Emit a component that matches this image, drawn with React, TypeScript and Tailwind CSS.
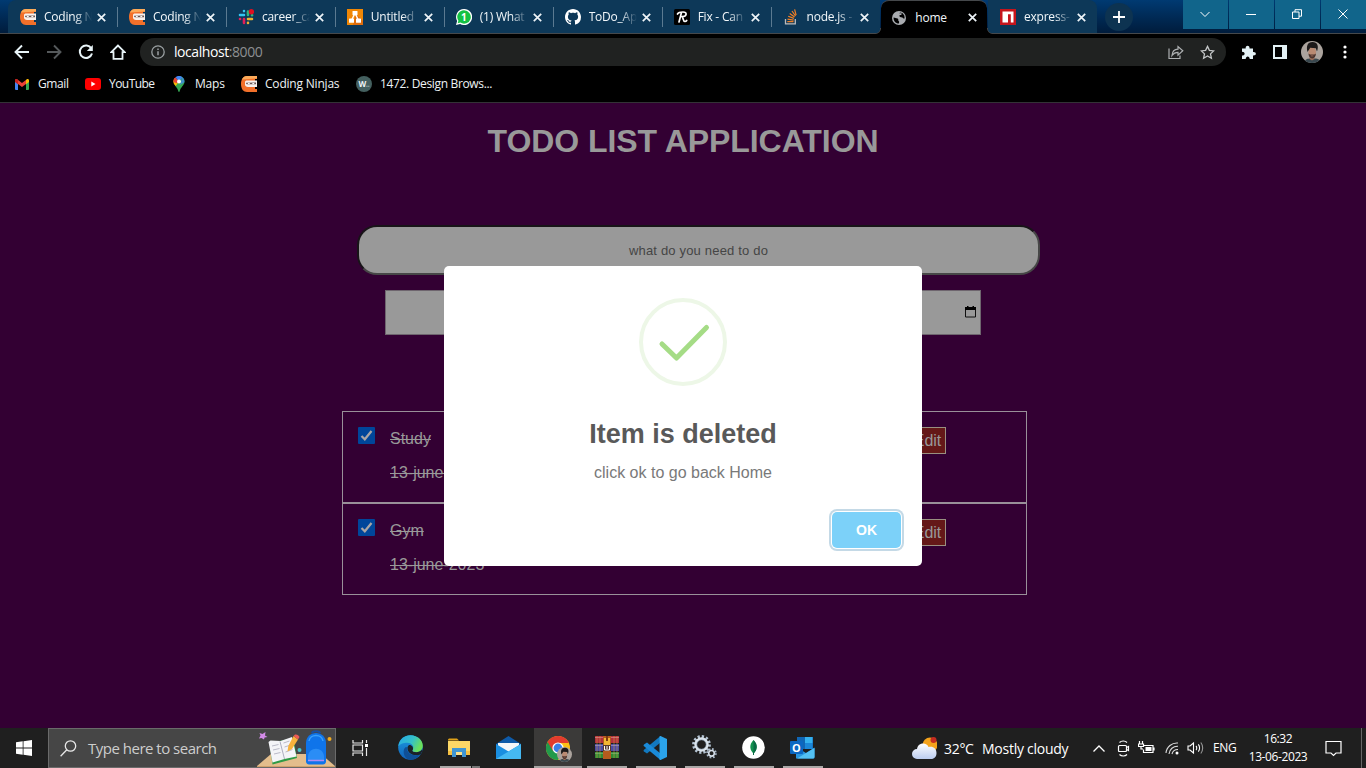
import type { ReactNode } from 'react';

const UI = "font-['Open_Sans','Noto_Sans',sans-serif]";

function Ninja({ size = 16 }: { size?: number }) {
  return (
    <svg width={size} height={size} viewBox="0 0 16 16">
      <path d="M16 0H6C2.500 0 0 3 0 8s2.500 8 6 8h10v-3H14V3h2z" fill="#f2702a" />
      <path d="M16 0H6C3.500 0 1.700 1.500.8 3.600L16 2.400z" fill="#fbab5a" />
      <path d="M4 6C4 5 5 4.500 6 4.500h10V11H7c-1.800 0-3-1-3-2.500z" fill="#f7f1ee" />
      <path d="M5 6.800L15 6.500v1.800H6.500C5.500 8.300 5 7.800 5 6.800z" fill="#6a5552" />
      <path d="M6.800 7.400l2 .2M11.300 7.600l2-.2" stroke="#fff" strokeWidth="1" />
    </svg>
  );
}
const Slack = () => (
  <svg width="16" height="16" viewBox="0 0 16 16" strokeWidth="2.600" strokeLinecap="round" fill="none">
    <path d="M6 2v.1M2 6h4" stroke="#36c5f0" />
    <path d="M14 6.200h.1M10 2.500V6" stroke="#2eb67d" />
    <path d="M10 14v-.1M10 10h4" stroke="#ecb22e" />
    <path d="M2 10h.1M6 10v4" stroke="#e01e5a" />
    <circle cx="13.400" cy="2.800" r="2.700" fill="#e01020" />
  </svg>
);
const DrawIo = () => (
  <svg width="16" height="16" viewBox="0 0 16 16">
    <rect width="16" height="16" fill="#f08705" />
    <path d="M9 5L16 12v4H6z" fill="#df6c0c" />
    <path d="M8 4L4.500 11.500M8 4l3.500 7.500" stroke="#fff" strokeWidth="1.400" />
    <rect x="5.500" y="2" width="5" height="4.300" rx=".6" fill="#fff" />
    <rect x="2" y="9.500" width="5" height="4.300" rx=".6" fill="#fff" />
    <rect x="9" y="9.500" width="5" height="4.300" rx=".6" fill="#fff" />
  </svg>
);
const WhatsApp = () => (
  <span className="relative flex h-4 w-4 items-center justify-center">
    <svg width="16" height="16" viewBox="0 0 16 16" className="absolute inset-0">
      <path d="M8 0a8 8 0 0 0-6.900 12L0 16l4.100-1.100A8 8 0 1 0 8 0z" fill="#fff" />
      <path d="M8 1.300a6.700 6.700 0 0 0-5.600 10.400l-.7 2.600 2.700-.7A6.700 6.700 0 1 0 8 1.300z" fill="#14c244" />
    </svg>
    <span className="relative font-['Open_Sans',sans-serif] text-[10px] leading-none font-bold text-white">1</span>
  </span>
);
const Github = () => (
  <svg width="16" height="16" viewBox="0 0 16 16" fill="#fff">
    <path d="M8 0C3.580 0 0 3.580 0 8c0 3.540 2.290 6.530 5.470 7.590.4.070.55-.17.55-.38 0-.19-.01-.82-.01-1.490-2.010.37-2.530-.49-2.690-.94-.09-.23-.48-.94-.82-1.130-.28-.15-.68-.52-.01-.53.63-.01 1.080.58 1.230.82.72 1.210 1.870.87 2.330.66.07-.52.28-.87.51-1.070-1.780-.2-3.640-.89-3.640-3.950 0-.87.31-1.590.82-2.150-.08-.2-.36-1.020.08-2.120 0 0 .67-.21 2.200.82.64-.18 1.320-.27 2-.27s1.360.09 2 .27c1.530-1.040 2.200-.82 2.200-.82.44 1.100.16 1.920.08 2.120.51.56.82 1.270.82 2.150 0 3.070-1.870 3.750-3.650 3.950.29.25.54.73.54 1.480 0 1.070-.01 1.930-.01 2.200 0 .21.15.46.55.38A8.010 8.010 0 0 0 16 8c0-4.420-3.580-8-8-8z" />
  </svg>
);
const Resume = () => (
  <svg width="16" height="16" viewBox="0 0 16 16">
    <rect width="16" height="16" rx="1.500" fill="#000" />
    <path d="M3.500 5C4.500 3.200 6.500 3 9 3c4.500 0 4 4.500-1 4.700M7.500 3.500L5 13M8 7.800c1.500.5.8 4.700 3 4.700 1 0 1.300-.4 1.700-1" stroke="#fff" strokeWidth="1.700" fill="none" strokeLinecap="round" />
  </svg>
);
const StackOverflow = () => (
  <svg width="16" height="16" viewBox="0 0 16 16" fill="none">
    <path d="M2.500 10v4.800h9.800V10" stroke="#bcbbbb" strokeWidth="1.300" />
    <path d="M4.300 12.600h6.200M4.500 10.200l6.100.9M5.200 7.200l5.700 2.200M6.700 4.400l4.900 3.700M9 2l3.500 5M11.600.3l1.500 5.900" stroke="#f48024" strokeWidth="1.200" />
  </svg>
);
const Globe = () => (
  <svg width="16" height="16" viewBox="0 0 16 16">
    <circle cx="8" cy="8" r="7" fill="#a9acb0" />
    <path d="M2.600 7.500l4 1c1.500.5 0 1.500 1 2.500.8.600.6 1.500.2 2.600C4.500 13.400 2.300 10.700 2.600 7.500z" fill="#000" />
    <path d="M8 3.200h2.500c.5 1 0 1.800-1.500 1.800-1 0-.5 1.500 0 2 1.500.5 3 0 4 2l.6-1-.3-2.500-1.700-2.200L9.500 2.600z" fill="#000" />
  </svg>
);
const Npm = () => (
  <svg width="16" height="16" viewBox="0 0 16 16">
    <path fill="#c6151c" d="M0 0h16v16H0z" />
    <path fill="#fff" d="M2.500 2.500h11v11h-2.700V5.300H8v8.200H2.500z" />
  </svg>
);
const Gmail = () => (
  <svg width="14" height="11" viewBox="0 0 14 11">
    <path d="M0 2h3v9H1a1 1 0 0 1-1-1z" fill="#4285f4" />
    <path d="M11 2h3v8a1 1 0 0 1-1 1h-2z" fill="#34a853" />
    <path d="M0 1.500C0 .2 1.400-.4 2.400.4L7 4 11.600.4 11 5 7 8 0 2.800z" fill="#ea4335" />
    <path d="M11 1l.6-.6c1-.8 2.400-.2 2.400 1.100V3l-3 2.300z" fill="#fbbc04" />
    <path d="M0 1.500C0 .4 1.200-.2 2.200.3L3 1v4.300L0 3z" fill="#c5221f" />
  </svg>
);
const YouTube = () => (
  <svg width="16" height="12" viewBox="0 0 16 12">
    <rect width="16" height="12" rx="3" fill="#f00" />
    <path d="M6.300 3.500v5L10.500 6z" fill="#fff" />
  </svg>
);
const Maps = () => (
  <svg width="12" height="16" viewBox="0 0 12 16">
    <path d="M6 0a5.500 5.500 0 0 1 5.500 5.500C11.500 9.500 7.500 11 6.600 15.500c-.1.600-1.100.6-1.200 0C4.800 12.500 3.500 11.500 2 9.400z" fill="#34a853" />
    <path d="M1.200 8.200A5.500 5.500 0 0 1 1.700 2L6 5.500 2.700 10z" fill="#fbbc04" />
    <path d="M1.700 2.100A5.500 5.500 0 0 1 2.500 1.300L6 5 3.800 7.300.5 6C.4 4.300.8 3 1.700 2.100z" fill="#ea4335" />
    <path d="M2.500 1.300A5.500 5.500 0 0 1 9.500 1.300L6 5.500z" fill="#4285f4" />
    <path d="M9.300 1.200c1.600 1.100 2.400 3 2.100 5L7 9z" fill="#4285f4" opacity=".75" />
    <circle cx="6" cy="5.400" r="2" fill="#fff" />
  </svg>
);

function Close() {
  return (
    <svg width="9" height="9" viewBox="0 0 9 9" className="shrink-0">
      <path d="M.8.8l7.400 7.400M8.200.8L.8 8.200" stroke="#eef4f8" strokeWidth="1.700" />
    </svg>
  );
}

const tabs: { icon: ReactNode; label: string; active?: boolean; sep?: boolean }[] = [
  { icon: <Ninja />, label: 'Coding N', sep: true },
  { icon: <Ninja />, label: 'Coding N', sep: true },
  { icon: <Slack />, label: 'career_ca', sep: true },
  { icon: <DrawIo />, label: 'Untitled', sep: true },
  { icon: <WhatsApp />, label: '(1) What', sep: true },
  { icon: <Github />, label: 'ToDo_Ap', sep: true },
  { icon: <Resume />, label: 'Fix - Can', sep: true },
  { icon: <StackOverflow />, label: 'node.js -' },
  { icon: <Globe />, label: 'home', active: true },
  { icon: <Npm />, label: 'express-' },
];

function TabStrip() {
  return (
    <div className="flex h-[34px] shrink-0 border-b border-[#45484b] bg-linear-to-b from-[#003a72] to-[#001c3c]">
      <div className="flex w-[1097px] pl-2">
        {tabs.map((t, i) => (
          <div
            key={i}
            className={
              'flex h-[33px] shrink-0 items-center pt-px ' +
              (t.active
                ? 'relative z-10 mr-[0.500px] ml-[1.100px] h-[34px] w-[106.900px] rounded-t-lg border-t border-[#45484b] bg-black pb-px pl-[10.700px]'
                : 'w-[108.950px] bg-[#0d3858] pl-3') +
              (i === 0 ? ' rounded-tl-lg' : '') +
              (i === 9 ? ' rounded-tr-lg' : '')
            }
          >
            {t.active && (
              <>
                <span className="absolute bottom-0 -left-[6px] h-[6px] w-[6px] bg-[radial-gradient(circle_at_0_0,transparent_5px,#45484b_5.500px,#000_6.500px)]" />
                <span className="absolute -right-[6px] bottom-0 h-[6px] w-[6px] bg-[radial-gradient(circle_at_6px_0,transparent_5px,#45484b_5.500px,#000_6.500px)]" />
              </>
            )}
            <span className="flex h-4 w-4 shrink-0 items-center justify-center">{t.icon}</span>
            <span
              className={
                'ml-2 w-[48px] shrink-0 text-[12px] tracking-[-0.220px] whitespace-nowrap text-[#f2f7fa] ' +
                (t.active ? '' : 'mask-r-from-65% mask-r-to-100%')
              }
            >
              {t.label}
            </span>
            <span className="ml-[5px] flex">
              <Close />
            </span>
            {t.sep && <span className="relative z-10 -mr-px ml-auto h-5 w-px bg-[#5b7a91]" />}
          </div>
        ))}
      </div>
      <div className="ml-2 flex items-center">
        <span className="flex h-7 w-7 items-center justify-center rounded-full bg-[#0d3351]">
          <svg width="12" height="12" viewBox="0 0 12 12">
            <path d="M6 0v12M0 6h12" stroke="#fff" strokeWidth="1.800" />
          </svg>
        </span>
      </div>
      <div className="ml-auto flex h-[29px] gap-px">
        {[
          <path key="a" d="M.5 3l4.500 4.500L9.500 3" />,
          <path key="b" d="M0 5.500h10" />,
          <path key="c" d="M.5 3h6.500v6.500H.5zM3 3V.7h6.500v6.500H7" />,
          <path key="d" d="M.5.5l9 9M9.500.5l-9 9" />,
        ].map((p, i) => (
          <span key={i} className="flex w-[45px] items-center justify-center bg-[#11658b] pr-px pb-px">
            <svg width="10" height="10" viewBox="0 0 10 10" fill="none" stroke="#fff" strokeWidth="1">
              {p}
            </svg>
          </span>
        ))}
      </div>
    </div>
  );
}

function Avatar({ size }: { size: number }) {
  return (
    <svg width={size} height={size} viewBox="0 0 22 22">
      <clipPath id={'av' + size}>
        <circle cx="11" cy="11" r="11" />
      </clipPath>
      <g clipPath={'url(#av' + size + ')'}>
        <path d="M0 0h22v22H0z" fill="#aba39d" />
        <path d="M3 22c1-4 4-4.500 6-4.500h5c3 0 5 1 6 4.500z" fill="#39484f" />
        <path d="M8.500 13h5v5l-2.500 1.500-2.500-1.500z" fill="#9a6d58" />
        <ellipse cx="11.200" cy="11.200" rx="3.800" ry="5.400" fill="#b98a72" />
        <path d="M6.500 11C5 5 6.500 1 11.500 1S18 5 16 10.500L14.800 7.200l-5.500-.4L7.800 9z" fill="#1d1a1a" />
        <path d="M7.500 12.500c1 1.200 2.500 1.100 3.700 1.100s2.700.1 3.700-1.100c0 2.800-1.500 5-3.700 5s-3.700-2.200-3.700-5z" fill="#4a342d" />
        <path d="M9.800 14.900h2.600" stroke="#a8705f" strokeWidth=".8" />
      </g>
    </svg>
  );
}

function Toolbar() {
  return (
    <div className="flex h-9 shrink-0 items-center bg-black">
      <div className="flex w-[140px] items-center gap-4 pl-[14px]">
        <svg width="16" height="16" viewBox="0 0 16 16" fill="none" stroke="#e8f4f8" strokeWidth="1.900">
          <path d="M15 8H2M8 1.500L1.500 8 8 14.500" />
        </svg>
        <svg width="16" height="16" viewBox="0 0 16 16" fill="none" stroke="#55595b" strokeWidth="1.900">
          <path d="M1 8h13M8 1.500L14.500 8 8 14.500" />
        </svg>
        <svg width="16" height="16" viewBox="0 0 16 16" fill="none" stroke="#e8f4f8" strokeWidth="2">
          <path d="M13.300 4.400A6.200 6.200 0 1 0 14 9.500" />
          <path d="M14.800 1v6h-6z" fill="#e8f4f8" stroke="none" />
        </svg>
        <svg width="16" height="16" viewBox="0 0 16 16" fill="none" stroke="#e8f4f8" strokeWidth="1.800">
          <path d="M8 1.500L1.300 8.200H3.500v6.600h9V8.200h2.200z" />
        </svg>
      </div>
      <div className="flex h-7 w-[1086px] items-center rounded-full bg-[#202221] pr-[11px] pl-[11px]">
        <svg width="14" height="14" viewBox="0 0 14 14" fill="none" stroke="#9aa0a2" strokeWidth="1.300">
          <circle cx="7" cy="7" r="6.200" />
          <path d="M7 6.200v4M7 3.400v1.500" strokeWidth="1.500" />
        </svg>
        <span className="ml-[9px] pb-px text-[14px] tracking-[-0.430px] text-white">
          localhost<span className="text-[#8d9092]">:8000</span>
        </span>
        <svg width="16" height="16" viewBox="0 0 16 16" fill="none" stroke="#aeb1b2" strokeWidth="1.200" className="ml-auto">
          <path d="M1 4.500v10h11v-3M4 11.500C4.300 7.500 6.500 5.300 10 5.200V2.500l4.800 4.300-4.800 4.300V8.300C7.500 8.300 5.500 9.300 4 11.500z" />
        </svg>
        <svg width="15" height="15" viewBox="0 0 15 15" fill="none" stroke="#c4c7c8" strokeWidth="1.300" className="ml-4">
          <path d="M7.500 1.400l1.900 4 4.300.5-3.200 3 .9 4.300-3.900-2.200-3.900 2.200.9-4.300-3.200-3 4.300-.5z" />
        </svg>
      </div>
      <svg width="15" height="15" viewBox="0 0 15 15" fill="#e3f1f5" className="ml-[15px]">
        <path d="M1 3.500h3.700C4.200-.3 9-.3 8.500 3.500h3.500V7c3.800-.4 3.800 3.900 0 3.500V14H8.700c0-3.500-4-3.500-4 0H1v-3.500c3.500 0 3.500-3.700 0-3.700z" />
      </svg>
      <svg width="14" height="14" viewBox="0 0 14 14" className="ml-[17px]">
        <path d="M0 0h14v14H0z" fill="#e3f1f5" />
        <path d="M2 2h7v10H2z" fill="#000" />
      </svg>
      <span className="ml-[14px]">
        <Avatar size={22} />
      </span>
      <svg width="4" height="14" viewBox="0 0 4 14" fill="#fff" className="ml-[19.500px]">
        <circle cx="2" cy="2" r="1.600" />
        <circle cx="2" cy="7" r="1.600" />
        <circle cx="2" cy="12" r="1.600" />
      </svg>
    </div>
  );
}

function Bookmarks() {
  return (
    <div className="flex h-[33px] shrink-0 items-center border-b border-[#333236] bg-black pb-1 pl-[15px] text-[12px] tracking-[-0.200px] whitespace-nowrap text-[#eef3f5]">
      <Gmail />
      <span className="ml-[9px] w-[47px] tracking-[-0.400px]">Gmail</span>
      <YouTube />
      <span className="ml-2 w-[64px] tracking-[-0.550px]">YouTube</span>
      <Maps />
      <span className="ml-[10px] w-[46px]">Maps</span>
      <Ninja />
      <span className="ml-2 w-[91px]">Coding Ninjas</span>
      <span className="flex h-4 w-4 items-center justify-center rounded-full bg-[#44605f] text-[8px] font-bold tracking-[-0.500px]">
        W<span className="text-[#8fa5a4]">..</span>
      </span>
      <span className="ml-2 tracking-[-0.340px]">1472. Design Brows...</span>
    </div>
  );
}

function TodoRow({ title }: { title: string }) {
  return (
    <div className="flex h-[92px] border border-[#999099] pl-[15px] text-[16px] text-[#999]">
      <span className="mt-[15px] flex h-[17px] w-[17px] items-center justify-center rounded-[1px] bg-[#00469a]">
        <svg width="13" height="13" viewBox="0 0 13 13" fill="none" stroke="#aaa6a6" strokeWidth="2.200">
          <path d="M1.500 7l3.300 3.300L11.500 2" />
        </svg>
      </span>
      <div className="ml-[15px] flex w-[516px] flex-col pt-[10px] leading-[34px] line-through">
        <span>{title}</span>
        <span>13-june-2023</span>
      </div>
      <span className="mt-[15px] flex h-[27px] w-[40px] items-center justify-center border border-[#999080] bg-[#641818] pl-[3px] text-[#999]">
        Edit
      </span>
    </div>
  );
}

function Page() {
  return (
    <div className="relative flex h-[625px] shrink-0 flex-col bg-[#330033] font-['Liberation_Sans',Arial,sans-serif]">
      <h1 className="mt-5 text-center text-[32px] leading-[37px] font-bold tracking-[-0.060px] text-[#999]">TODO LIST APPLICATION</h1>
      <div className="mt-[65px] ml-[357px] flex h-[50px] w-[683px] items-center justify-center rounded-[20px] border-2 border-t-[#181418] border-r-[#474747] border-b-[#474747] border-l-[#181418] bg-[#999] pt-0.5 text-[13px] text-[#454545]">
        <span className="tracking-[0.180px]">what do you need to do</span>
      </div>
      <div className="mt-[15px] ml-[385px] flex h-[45px] w-[596px] items-center justify-end border border-[#6e656e] bg-[#999] pr-1 pb-px">
        <svg width="11" height="12" viewBox="0 0 11 12">
          <path d="M.5 2.500h10v8.500H.5z" fill="none" stroke="#111" />
          <path d="M0 1h11v3H0zM2 0h1.500v2H2zM7.500 0H9v2H7.500z" fill="#000" />
        </svg>
      </div>
      <div className="mt-[76px] ml-[342px] w-[685px]">
        <TodoRow title="Study" />
        <TodoRow title="Gym" />
      </div>
      <div className="absolute inset-0 flex items-center justify-center pt-px">
        <div className="flex h-[300px] w-[478px] flex-col items-center rounded-[5px] bg-white">
          <svg width="88" height="88" viewBox="0 0 88 88" fill="none" className="mt-8 shrink-0">
            <circle cx="44" cy="44" r="42" stroke="#edf7e7" strokeWidth="4" />
            <path d="M23 46l14.500 14L67.500 29.500" stroke="#a5dc86" strokeWidth="5" strokeLinecap="round" strokeLinejoin="round" />
          </svg>
          <div className="mt-[32px] text-[27px] leading-8 font-bold text-[#595959]">Item is deleted</div>
          <div className="mt-[14px] text-[16px] leading-[18px] text-[#797979]">click ok to go back Home</div>
          <div className="mt-[30px] mr-[21px] flex h-9 w-[69px] items-center justify-center self-end rounded-[5px] bg-[#7cd1f9] text-[14px] font-bold text-white shadow-[0_0_0_1px_#fff,0_0_0_3px_#c4d9e6]">
            OK
          </div>
        </div>
      </div>
    </div>
  );
}

const Edge = () => (
  <svg width="25" height="25" viewBox="0 0 24 24">
    <defs>
      <linearGradient id="e1" x1="0" y1="0" x2="1" y2=".4">
        <stop offset="0" stopColor="#25a8e8" />
        <stop offset=".6" stopColor="#35c1c8" />
        <stop offset="1" stopColor="#6be05a" />
      </linearGradient>
      <linearGradient id="e2" x1="0" y1="0" x2="0" y2="1">
        <stop offset="0" stopColor="#1b9de2" />
        <stop offset="1" stopColor="#1160b8" />
      </linearGradient>
    </defs>
    <circle cx="12" cy="12" r="11.800" fill="url(#e2)" />
    <path d="M8.500 12c0 6 6 9 12.500 6.500-2 3.500-5.500 5.300-9 5.300C7 23.500 5 18 5.500 15S8 11 8.500 12z" fill="#0f4f96" />
    <path d="M.3 11C1 4 6 .2 12 .2c7 0 11.800 5 11.800 10 0 4-3 6.300-6.300 6.300-3 0-4.500-1.200-3.500-2.300C16 11.500 13.500 7.500 9 7.500 5 7.500 1.500 9 .3 11z" fill="url(#e1)" />
    <path d="M14.200 14.200c-1 1-.2 2.300 3.300 2.300 2.300 0 4.300-1 5.500-2.700l.6 1.200-2 3.700c-6 1.800-12.500-.4-12.500-6.200 0-1 .4-2.200 1.500-3 2.800-.2 4.600 2.500 3.600 4.700z" fill="#1c2228" />
  </svg>
);
const Folder = () => (
  <svg width="23" height="20" viewBox="0 0 23 20">
    <path d="M0 1.500L1 .5h8l2 2H0z" fill="#e0a21a" />
    <path d="M0 3h22v14H0z" fill="#fcd766" />
    <path d="M0 13h22v4H0z" fill="#f5bf40" />
    <path d="M4 10h14v9h-4v-5H8v5H4z" fill="#3f95d2" />
    <path d="M8 14h6v3H8z" fill="#fbe08a" />
  </svg>
);
const Mail = () => (
  <svg width="25" height="23" viewBox="0 0 25 23">
    <path d="M0 8L12.500 0 25 8v4H0z" fill="#0e5aa8" />
    <path d="M2 7h21v10H2z" fill="#f4f6f8" />
    <path d="M0 8l12.500 7.500L25 8v15H0z" fill="#1a8ee0" />
    <path d="M0 23L12.500 15.500 25 8v15z" fill="#45b8f2" />
  </svg>
);
const Chrome = () => (
  <span className="relative flex">
    <svg width="24" height="24" viewBox="0 0 24 24">
      <circle cx="12" cy="12" r="12" fill="#fbc116" />
      <path d="M12 12L1.600 6A12 12 0 0 0 12 24l5-8.800z" fill="#229a4b" />
      <path d="M12 7h10.900A12 12 0 0 0 1.600 6L7 15z" fill="#e33b2e" />
      <circle cx="12" cy="12" r="5.600" fill="#fff" />
      <circle cx="12" cy="12" r="4.400" fill="#3c7ee8" />
    </svg>
    <span className="absolute top-[11px] left-[11px]">
      <Avatar size={15} />
    </span>
  </span>
);
const WinRar = () => (
  <svg width="24" height="23" viewBox="0 0 24 23">
    <path d="M0 0h24v7H0z" fill="#b02f3d" />
    <path d="M0 8h24v7H0z" fill="#4a4aa5" />
    <path d="M0 16h24v6H0z" fill="#2f8a35" />
    <path d="M0 1.500h24M0 9.500h24M0 17.300h24" stroke="#fff" strokeOpacity=".3" />
    <path d="M2 0v22M5 0v22M19 0v22M22 0v22" stroke="#d9a441" strokeWidth=".5" />
    <path d="M8 0h8v23H8z" fill="#b55b1d" />
    <path d="M9 2h6v7H9z" fill="#f2b632" />
    <path d="M11 0h2v5h-2z" fill="#7e3b10" />
    <path d="M8 9h8v6H8z" fill="#5b3b2c" />
    <path d="M9.500 10v4h5v-4M12 10v3" stroke="#fff" fill="none" />
  </svg>
);
const VsCode = () => (
  <svg width="25" height="24" viewBox="0 0 25 24">
    <path d="M17.500 0v6.500L4 17.500 1 15.500c-.6-.5-.6-1.300 0-1.800z" fill="#1279c0" />
    <path d="M17.500 24v-6.500L4 6.500 1 8.500c-.6.500-.6 1.300 0 1.800z" fill="#1a8ad8" />
    <path d="M17.500 0L24 3v18l-6.500 3c-.8 0-1-.5-1-1V1c0-.5.200-1 1-1z" fill="#2ba3ea" />
  </svg>
);
const Gears = () => (
  <svg width="25" height="25" viewBox="0 0 25 25" fill="none">
    <circle cx="9.500" cy="9.500" r="7.900" stroke="#b5c4d3" strokeWidth="3" strokeDasharray="2.200 1.940" />
    <circle cx="9.500" cy="9.500" r="5.900" stroke="#dbe4ec" strokeWidth="2.600" />
    <circle cx="9.500" cy="9.500" r="4.600" stroke="#74889c" strokeWidth=".6" />
    <circle cx="19.500" cy="18.300" r="4.300" stroke="#a8b8c8" strokeWidth="2" strokeDasharray="1.700 1.680" />
    <circle cx="19.500" cy="18.300" r="2.800" stroke="#d5dee8" strokeWidth="1.600" />
  </svg>
);
const Mongo = () => (
  <svg width="23" height="23" viewBox="0 0 23 23">
    <circle cx="11.500" cy="11.500" r="11.300" fill="#fff" />
    <path d="M11.500 4c5 5 3.500 10.500 0 13.500C8 14.500 6.500 9 11.500 4z" fill="#12924f" />
    <path d="M11.500 4c5 5 3.500 10.500 0 13.500z" fill="#0a6b45" />
    <path d="M11.500 16v3" stroke="#0a6b45" />
  </svg>
);
const Outlook = () => (
  <span className="relative flex">
    <svg width="25" height="23" viewBox="0 0 25 23">
      <path d="M7 1h16v12H7z" fill="#1066b5" />
      <path d="M15 1h7.500v6H15z" fill="#35b1ee" />
      <path d="M15 7h7.500v6H15z" fill="#1b87d8" />
      <path d="M6 11l10 6 8.500-5.500V21a1.500 1.500 0 0 1-1.500 1.500H6z" fill="#2796e2" />
      <path d="M7 22.500L24.500 12V21a1.500 1.500 0 0 1-1.500 1.500z" fill="#53c1f3" />
      <rect y="5" width="13" height="13" rx="1" fill="#0b67c2" />
    </svg>
    <span className="absolute top-[5px] left-0 w-[13px] text-center text-[11px] leading-[13px] font-bold text-white">O</span>
  </span>
);

function SearchArt() {
  return (
    <svg width="80" height="39" viewBox="0 0 80 39" className="-mr-px ml-auto shrink-0">
      <path d="M1 37L15 25h50l14 12z" fill="#e3bd8c" />
      <path d="M1 39v-2h79v2z" fill="#cfa06b" />
      <path d="M8 10.500L5.500 9 3 9.500l1.500-3L3.500 4 6.500 5 9.500 3 9 6.500l2.500 1.500L8.500 8.500z" fill="#d38be8" />
      <path d="M13.500 14l24-5 3.500 20-24.500 6.500z" fill="#2e9b45" />
      <path d="M12.500 13l2-1.500 10 .5L36 8l4.500 19.500-12 2.500-12 3.500z" fill="#f4f4f8" />
      <path d="M24 12.500l4.500 17.500" stroke="#a5a5b8" strokeWidth=".9" />
      <path d="M16 17l6.500-1.500M17 21l6.500-1.500M18 25l6.500-1.500M27.500 14l6-2M28.500 18l6-2M29.500 23l7-2.500" stroke="#aaaabb" strokeWidth=".8" />
      <path d="M37.500 7l4.500 3.500L36 20l-4.500 2.500.8-5.500z" fill="#f7b13c" />
      <path d="M37.500 7l4.500 3.500 1.500-2.500c-.5-1.500-2.500-3-4.500-2.500z" fill="#ed5b55" />
      <circle cx="43.500" cy="21" r="2" fill="#4bc5cb" />
      <path d="M56 4.500c0-3 8-3 8 0" stroke="#174ea3" strokeWidth="2" fill="none" />
      <path d="M50 14c0-13.500 20-13.500 20 0v18c0 2-1 3.500-3 3.500H53c-2 0-3-1.500-3-3.500z" fill="#0f74ea" />
      <path d="M53 12c1-7.500 13-7.500 14 0" stroke="#3aa0fa" strokeWidth="1.500" fill="none" />
      <path d="M52 28c0-11 16-11 16 0v4H52z" fill="#2b8df5" />
      <path d="M52 31.500h16" stroke="#b08cf5" strokeWidth="1.500" />
      <circle cx="73.500" cy="10" r="2" fill="#f2ac20" />
    </svg>
  );
}

const apps: { icon: ReactNode; open: boolean; active?: boolean }[] = [
  { icon: <Edge />, open: false },
  { icon: <Folder />, open: true },
  { icon: <Mail />, open: false },
  { icon: <Chrome />, open: false, active: true },
  { icon: <WinRar />, open: true },
  { icon: <VsCode />, open: true },
  { icon: <Gears />, open: true },
  { icon: <Mongo />, open: true },
  { icon: <Outlook />, open: true },
];

function Taskbar() {
  return (
    <div className="flex h-10 shrink-0 items-stretch bg-[#1f1f1f] text-white">
      <div className="flex w-12 items-center justify-center">
        <svg width="16" height="16" viewBox="0 0 16 16" fill="#fff">
          <path d="M0 2.300L6.700 1.300V7.600H0zM7.500 1.200L16 0v7.600H7.500zM0 8.400h6.700v6.300L0 13.700zM7.500 8.400H16V16l-8.500-1.200z" />
        </svg>
      </div>
      <div className="flex w-72 items-center overflow-hidden border border-[#6a6a6a] bg-[#464646] pl-[11px]">
        <svg width="17" height="17" viewBox="0 0 17 17" fill="none" stroke="#e8e8e8" strokeWidth="1.300">
          <circle cx="10.500" cy="6" r="5.200" />
          <path d="M6.800 9.800L.6 16.200" />
        </svg>
        <span className="ml-[11px] text-[15px] tracking-[-0.500px] whitespace-nowrap text-[#cdcdcd]">Type here to search</span>
        <SearchArt />
      </div>
      <div className="flex w-[50px] items-center justify-center pr-[2px]">
        <svg width="17" height="16" viewBox="0 0 17 16" fill="none" stroke="#e8e8e8" strokeWidth="1.200">
          <path d="M1 0v3h9.500V0M1 16v-3h9.500v3M1 5h9.500v6H1zM14.500 0v3M14.500 8v8" />
          <path d="M13 4h3v3h-3z" fill="#fff" stroke="none" />
        </svg>
      </div>
      <div className="flex w-[442px]">
        {apps.map((a, i) => (
          <div key={i} className="flex w-[49px] shrink-0 flex-col items-start">
            <div className={'flex w-12 flex-col items-center ' + (a.active ? 'ml-px bg-[#3b3a39]' : 'ml-px')}>
              <div className="mr-px flex h-[38px] items-center pt-px">{a.icon}</div>
              <div
                className={
                  'flex h-[2px] justify-end ' +
                  (a.active ? 'w-full bg-[#a5a3a2]' : a.open ? 'w-10 bg-[#aaa8a7]' : 'w-10')
                }
              >
                {i === 1 && <span className="w-[9px] border-l border-[#1f1f1f] bg-[#777]" />}
              </div>
            </div>
          </div>
        ))}
      </div>
      <div className="ml-[84px] flex w-[180px] items-center">
        <svg width="25" height="22" viewBox="0 0 25 22">
          <defs>
            <linearGradient id="cl" x1="0" y1="0" x2="0" y2="1">
              <stop offset="0" stopColor="#fff" />
              <stop offset="1" stopColor="#bccdf0" />
            </linearGradient>
          </defs>
          <circle cx="18" cy="8" r="7.500" fill="#f5a31c" />
          <circle cx="21.500" cy="3" r="3" fill="#c52c20" />
          <path d="M5 22a5 5 0 0 1 0-10C6 5 15 5 16.500 10c5-1 8 2 8 6 0 3.500-2 6-5.500 6z" fill="url(#cl)" />
        </svg>
        <span className="ml-[7px] w-[38px] text-[14px] tracking-[-0.300px]">32°C</span>
        <span className="text-[14px] tracking-[-0.260px] whitespace-nowrap">Mostly cloudy</span>
      </div>
      <div className="flex flex-1 items-center text-[12px]">
        <svg width="12" height="7" viewBox="0 0 12 7" fill="none" stroke="#fff" strokeWidth="1.300" className="ml-px">
          <path d="M.5 6.500L6 1l5.500 5.500" />
        </svg>
        <svg width="13" height="17" viewBox="0 0 13 17" fill="none" stroke="#fff" strokeWidth="1.200" className="ml-[12px]">
          <path d="M2.500 5.500h6q1 0 1 1v4q0 1-1 1h-6q-1 0-1-1v-4q0-1 1-1zM9.500 7.500l2-1v4l-2-1M2.500 2.500C4.500.5 8 .5 10 2.500M2.500 14.500c2 2 5.500 2 7.500 0" />
        </svg>
        <svg width="17" height="14" viewBox="0 0 17 14" fill="none" stroke="#fff" strokeWidth="1.200" className="ml-[8px]">
          <path d="M1.500 0v3M4.500 0v3M.5 3h5v2.500h-5zM3 5.500V8h2M6 4.500h9v7H5.500v-3M16 6.500v3" />
          <path d="M7.500 6h6v4h-6z" fill="#fff" stroke="none" />
        </svg>
        <svg width="14" height="14" viewBox="0 0 14 14" fill="none" stroke="#ddd" strokeWidth="1.100" className="ml-[10px]">
          <path d="M1 12A11 11 0 0 1 13 2M4 13A8.500 8.500 0 0 1 13 5.200M7 13A6 6 0 0 1 13 8.500" />
          <circle cx="12" cy="12" r="1.500" fill="#fff" stroke="none" />
        </svg>
        <svg width="17" height="14" viewBox="0 0 17 14" fill="none" stroke="#fff" strokeWidth="1.100" className="ml-2">
          <path d="M1 5h2l3.500-3v10L3 9H1zM9 5c1 1 1 3 0 4M11.300 3.300c1.700 2 1.700 5.400 0 7.400" />
          <path d="M13.800 1.500c2.500 3 2.500 8 0 11" stroke="#999" />
        </svg>
        <span className="ml-[9px] w-[27px] text-[12px] tracking-[-0.300px]">ENG</span>
        <span className="ml-[5px] flex w-[66px] flex-col items-center text-[12px] leading-[18px] tracking-[-0.400px] whitespace-nowrap">
          <span>16:32</span>
          <span>13-06-2023</span>
        </span>
        <svg width="17" height="17" viewBox="0 0 17 17" fill="none" stroke="#fff" strokeWidth="1.200" className="ml-[14px]">
          <path d="M1 1.500h15v11.500h-5L8.500 15.500 6 13H1z" />
        </svg>
        <span className="mr-1 ml-auto h-10 w-px bg-[#666]" />
      </div>
    </div>
  );
}

export default function App() {
  return (
    <div className={`flex h-[768px] w-[1366px] flex-col overflow-hidden bg-black ${UI}`}>
      <TabStrip />
      <Toolbar />
      <Bookmarks />
      <Page />
      <Taskbar />
    </div>
  );
}
